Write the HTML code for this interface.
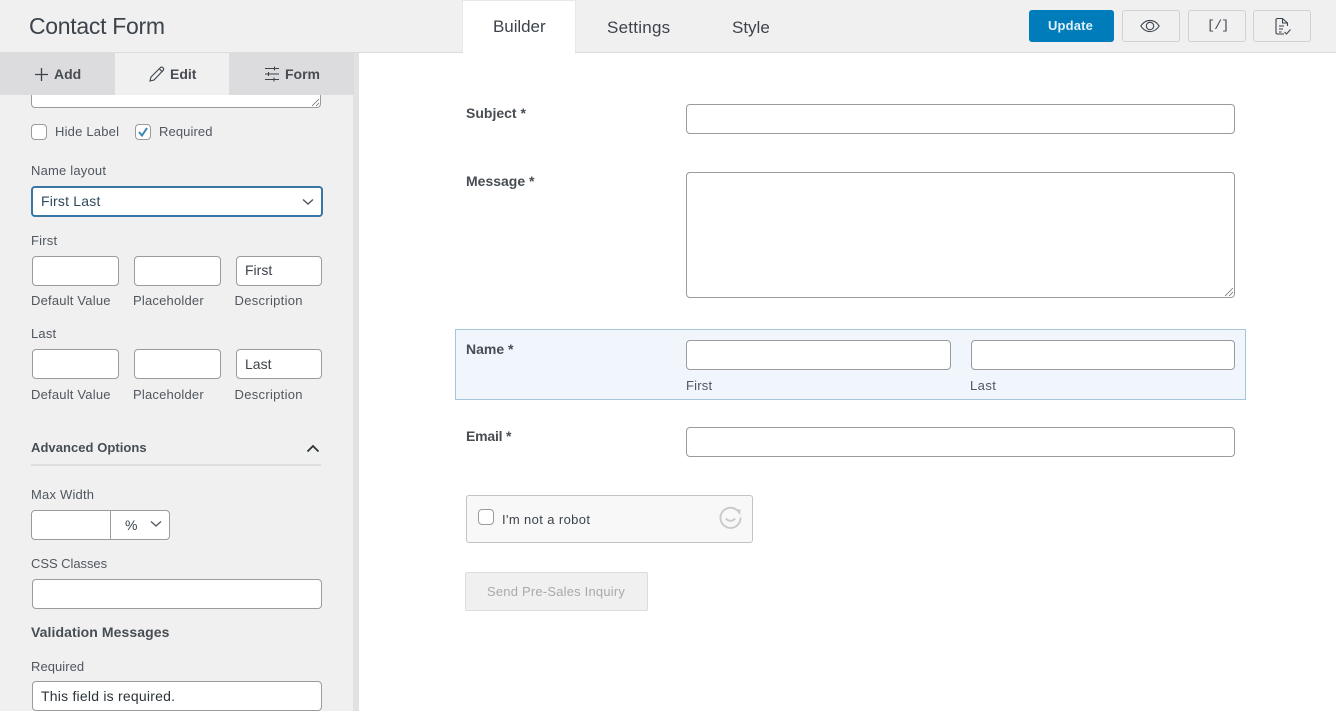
<!DOCTYPE html>
<html lang="en">
<head>
<meta charset="utf-8">
<title>Contact Form</title>
<style>
html,body{margin:0;padding:0;width:1336px;height:711px;overflow:hidden;background:#fff}
body{font-family:"Liberation Sans",sans-serif;color:#3c434a;position:relative}
.a{position:absolute;box-sizing:border-box}
.t{position:absolute;white-space:nowrap;font-size:13px;line-height:16px;color:#50575e;letter-spacing:.2px}
.b{font-weight:700;color:#474d53;letter-spacing:.05px}
.f{font-size:14px;letter-spacing:0}
.i{position:absolute;box-sizing:border-box;background:#fff;border:1px solid #999b9e;border-radius:4px;height:30px}
.btn{position:absolute;box-sizing:border-box;top:10px;height:32px;width:58px;background:#f0f0f1;border:1px solid #d0d1d3;border-radius:3px}
svg{position:absolute;overflow:visible}
</style>
</head>
<body>
<!-- top bar -->
<div class="a" style="left:0;top:0;width:1336px;height:53px;background:#f0f0f1;border-bottom:1px solid #dcdcde"></div>
<div class="t" style="left:29px;top:12px;font-size:23px;line-height:28px;color:#3c434a;letter-spacing:-.3px">Contact Form</div>
<div class="a" style="left:462px;top:0;width:114px;height:54px;background:#fff;border:1px solid #e8e8ea;border-bottom:none"></div>
<div class="t" style="left:493px;top:17px;font-size:17px;line-height:20px;color:#3c434a;letter-spacing:-.05px">Builder</div>
<div class="t" style="left:607px;top:18px;font-size:17px;line-height:20px;color:#3c434a;letter-spacing:.25px">Settings</div>
<div class="t" style="left:732px;top:18px;font-size:17px;line-height:20px;color:#3c434a;letter-spacing:0">Style</div>
<div class="a" style="left:1029px;top:10px;width:85px;height:32px;background:#007cba;border-radius:3px"></div>
<div class="t" style="left:1048px;top:18px;color:#dff0f8;font-weight:700;letter-spacing:.15px">Update</div>
<div class="btn" style="left:1122px"></div>
<svg style="left:1140px;top:19px" width="20" height="14" viewBox="0 0 20 14" fill="none" stroke="#3c434a" stroke-width="1.1"><path d="M.8 7C3.5 3 6.5 1.4 10 1.4S16.500 3 19.200 7C16.500 11 13.500 12.600 10 12.600S3.500 11 .8 7Z"/><circle cx="10" cy="7" r="3.700"/></svg>
<div class="btn" style="left:1188px"></div>
<div class="t" style="left:1207px;top:18px;font-family:'Liberation Mono',monospace;font-size:13px;color:#3c434a;letter-spacing:-.6px">[/]</div>
<div class="btn" style="left:1253px"></div>
<svg style="left:1275px;top:17px" width="17" height="19" viewBox="0 0 17 19" fill="none" stroke="#3c434a" stroke-width="1.100"><path d="M9 17H2.500Q1 17 1 15.500V3Q1 1.500 2.500 1.500H7.500L12.500 6V9"/><path d="M7.500 1.500V6H12.500"/><path d="M4 9H9M4 12H8M4 15H6.500"/><path d="M9.500 15L11.500 17L15.500 12.500"/></svg>

<!-- sidebar -->
<div class="a" style="left:0;top:53px;width:359px;height:658px;background:#f0f0f1"></div>
<div class="a" style="left:353px;top:53px;width:6px;height:658px;background:#e2e2e4"></div>
<div class="a" style="left:0;top:53px;width:115px;height:42px;background:#dcdcde"></div>
<div class="a" style="left:115px;top:53px;width:114px;height:42px;background:#f0f0f1"></div>
<div class="a" style="left:229px;top:53px;width:125px;height:42px;background:#dcdcde"></div>
<svg style="left:34px;top:67px" width="15" height="15" viewBox="0 0 15 15" stroke="#3c434a" stroke-width="1.300"><path d="M7.500 1V14M1 7.500H14"/></svg>
<div class="t b f" style="left:54px;top:66px">Add</div>
<svg style="left:149px;top:66px" width="16" height="16" viewBox="0 0 16 16" fill="none" stroke="#3c434a" stroke-width="1.100"><path d="M1 15L2 11L11.500 1.500Q12.700 .6 14 1.700Q15.200 3 14.300 4.300L5 14Z"/><path d="M10.300 2.800L13 5.500"/></svg>
<div class="t b f" style="left:170px;top:66px">Edit</div>
<svg style="left:264px;top:66px" width="16" height="16" viewBox="0 0 16 16" fill="none" stroke="#3c434a" stroke-width="1.100"><path d="M1 2.500H15M1 8H15M1 13.500H15M10.500 .6V4.400M4.500 6V10M10 11.500V15.400"/></svg>
<div class="t b f" style="left:285px;top:66px">Form</div>

<div class="a" style="left:31px;top:95px;width:290px;height:13px;background:#fff;border:1px solid #999b9e;border-top:none;border-radius:0 0 4px 4px"></div>
<svg style="left:311px;top:98px" width="9" height="9" viewBox="0 0 9 9" stroke="#6c6f74" stroke-width=".8"><path d="M1 8L8 1M5 8L8 5"/></svg>

<div class="a" style="left:31px;top:124px;width:16px;height:16px;background:#fff;border:1px solid #999b9e;border-radius:4px"></div>
<div class="t" style="left:55px;top:124px">Hide Label</div>
<div class="a" style="left:135px;top:124px;width:16px;height:16px;background:#fff;border:1px solid #999b9e;border-radius:4px"></div>
<svg style="left:137px;top:126px" width="12" height="12" viewBox="0 0 12 12" fill="none" stroke="#3a87ad" stroke-width="2"><path d="M2 6L5 9.500L10 2"/></svg>
<div class="t" style="left:159px;top:124px;letter-spacing:.1px">Required</div>

<div class="t" style="left:31px;top:163px;letter-spacing:.2px">Name layout</div>
<div class="a" style="left:31px;top:186px;width:292px;height:31px;background:#fff;border:2px solid #3a76a3;border-radius:4px"></div>
<div class="t" style="left:41px;top:193px;font-size:14px;color:#2c4a5e">First Last</div>
<svg style="left:302px;top:198px" width="12" height="8" viewBox="0 0 12 8" fill="none" stroke="#50575e" stroke-width="1.400"><path d="M1 1.500L6 6L11 1.500"/></svg>

<div class="t" style="left:31px;top:233px">First</div>
<div class="i" style="left:32px;top:256px;width:86.500px"></div>
<div class="i" style="left:134px;top:256px;width:86.500px"></div>
<div class="i" style="left:236px;top:256px;width:86px"></div>
<div class="t" style="left:245px;top:262px;font-size:14px;color:#3c434a;letter-spacing:0">First</div>
<div class="t" style="left:31px;top:293px">Default Value</div>
<div class="t" style="left:133px;top:293px">Placeholder</div>
<div class="t" style="left:234.500px;top:293px;letter-spacing:.3px">Description</div>

<div class="t" style="left:31px;top:326px">Last</div>
<div class="i" style="left:32px;top:349px;width:86.500px"></div>
<div class="i" style="left:134px;top:349px;width:86.500px"></div>
<div class="i" style="left:236px;top:349px;width:86px"></div>
<div class="t" style="left:245px;top:356px;font-size:14px;color:#3c434a;letter-spacing:0">Last</div>
<div class="t" style="left:31px;top:387px">Default Value</div>
<div class="t" style="left:133px;top:387px">Placeholder</div>
<div class="t" style="left:234.500px;top:387px;letter-spacing:.3px">Description</div>

<div class="t b" style="left:31px;top:440px">Advanced Options</div>
<svg style="left:306px;top:444px" width="14" height="9" viewBox="0 0 14 9" fill="none" stroke="#2c3338" stroke-width="1.800"><path d="M1.500 7.500L7 2L12.500 7.500"/></svg>
<div class="a" style="left:31px;top:464px;width:290px;height:2px;background:#dedee0"></div>

<div class="t" style="left:31px;top:487px">Max Width</div>
<div class="a" style="left:31px;top:510px;width:139px;height:30px;background:#fff;border:1px solid #999b9e;border-radius:4px"></div>
<div class="a" style="left:110px;top:510px;width:1px;height:30px;background:#999b9e"></div>
<div class="t" style="left:125px;top:517px;font-size:14px;letter-spacing:0;color:#3c434a">%</div>
<svg style="left:150px;top:520px" width="12" height="8" viewBox="0 0 12 8" fill="none" stroke="#50575e" stroke-width="1.300"><path d="M1 1.500L6 6L11 1.500"/></svg>

<div class="t" style="left:31px;top:556px;letter-spacing:-.05px">CSS Classes</div>
<div class="i" style="left:32px;top:579px;width:290px"></div>
<div class="t b" style="left:31px;top:624px;font-size:14px;letter-spacing:.08px">Validation Messages</div>
<div class="t" style="left:31px;top:659px;letter-spacing:.05px">Required</div>
<div class="i" style="left:32px;top:681px;width:290px"></div>
<div class="t" style="left:41px;top:688px;font-size:14px;color:#2c3338;letter-spacing:.22px">This field is required.</div>

<!-- form -->
<div class="t b f" style="left:466px;top:105px">Subject *</div>
<div class="i" style="left:686px;top:104px;width:549px"></div>
<div class="t b f" style="left:466px;top:173px">Message *</div>
<div class="a" style="left:686px;top:172px;width:549px;height:126px;background:#fff;border:1px solid #999b9e;border-radius:4px"></div>
<svg style="left:1224px;top:287px" width="10" height="10" viewBox="0 0 10 10" stroke="#6c6f74" stroke-width=".8"><path d="M1 9L9 1M5 9L9 5"/></svg>

<div class="a" style="left:455px;top:329px;width:791px;height:71px;background:#f0f6fc;border:1px solid #a5c6da"></div>
<div class="t b f" style="left:466px;top:341px">Name *</div>
<div class="i" style="left:686px;top:340px;width:264.500px"></div>
<div class="i" style="left:970.500px;top:340px;width:264.500px"></div>
<div class="t" style="left:686px;top:378px">First</div>
<div class="t" style="left:970px;top:378px;letter-spacing:.45px">Last</div>

<div class="t b f" style="left:466px;top:428px;letter-spacing:-.2px">Email *</div>
<div class="i" style="left:686px;top:427px;width:549px;height:29.500px"></div>

<div class="a" style="left:466px;top:495px;width:287px;height:48px;background:#f8f8f8;border:1px solid #c2c3c5;border-radius:3px"></div>
<div class="a" style="left:478px;top:509px;width:16px;height:16px;background:#fff;border:1px solid #999b9e;border-radius:4px"></div>
<div class="t" style="left:502px;top:512px;color:#3c434a;letter-spacing:.38px">I'm not a robot</div>
<svg style="left:719px;top:506px" width="23" height="23" viewBox="0 0 24 24" fill="none" stroke="#cacacc" stroke-width="2"><path d="M19 4.500A10.500 10.500 0 1 0 22.500 12"/><path d="M17 3.500L22.500 3.500L22 9.500Z" fill="#cacacc" stroke="none"/><path d="M7 13Q12 18 17 13"/></svg>

<div class="a" style="left:465px;top:572px;width:182.500px;height:38.500px;background:#f0f0f1;border:1px solid #dcdcde;border-radius:2px"></div>
<div class="t" style="left:487px;top:584px;color:#a7aaad;letter-spacing:.2px">Send Pre-Sales Inquiry</div>
</body>
</html>
